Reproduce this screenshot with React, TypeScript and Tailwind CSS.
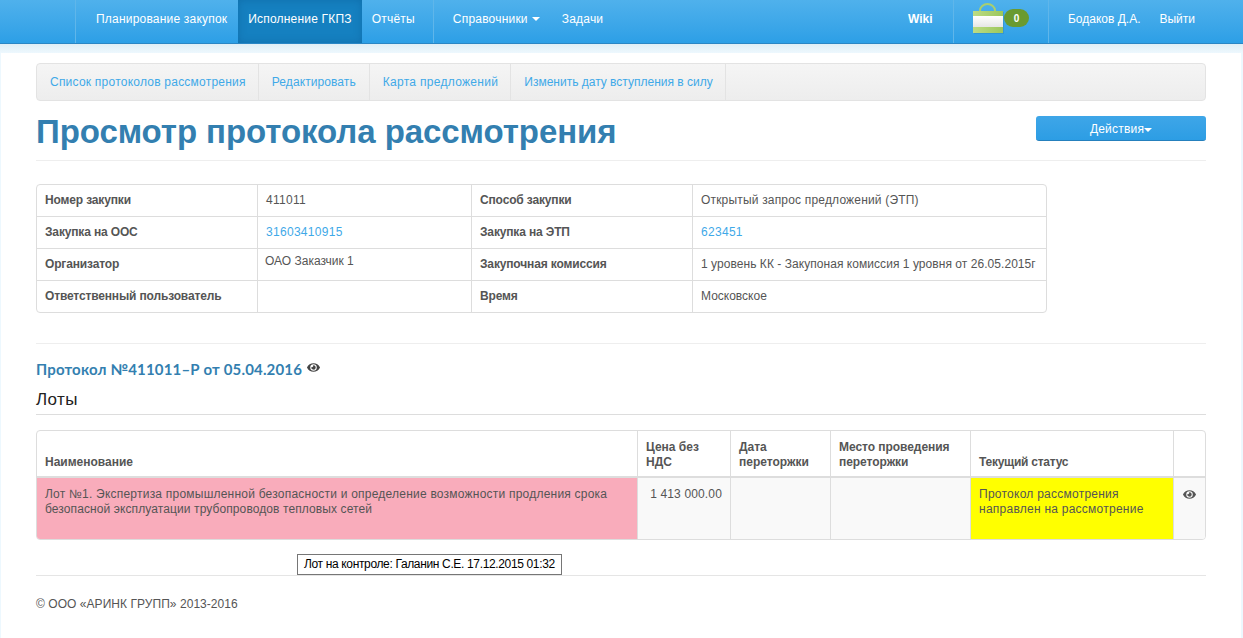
import { FaEye } from "react-icons/fa";

const font = "font-['Liberation_Sans',Arial,sans-serif]";

const BagIcon = () => (
	<svg width="31" height="31" viewBox="0 0 31 31">
		<defs>
			<linearGradient id="bagTop" x1="0" y1="0" x2="1" y2="0">
				<stop offset="0" stopColor="#bcdc84" />
				<stop offset="1" stopColor="#9cc75c" />
			</linearGradient>
			<linearGradient id="bagMid" x1="0" y1="0" x2="0" y2="1">
				<stop offset="0" stopColor="#ffffff" />
				<stop offset="1" stopColor="#e6e6e6" />
			</linearGradient>
		</defs>
		<path d="M7 9V7.5a7.5 6.5 0 0 1 15 0V9" fill="none" stroke="#a9cf6e" strokeWidth="2" />
		<rect x="1" y="9" width="30" height="22" fill="#2a7fb5" opacity="0.35" />
		<rect x="0" y="8" width="30" height="22" fill="url(#bagTop)" />
		<rect x="0" y="13" width="30" height="11" fill="url(#bagMid)" />
	</svg>
);

const Caret = ({ className = "" }: { className?: string }) => (
	<span
		className={`inline-block w-0 h-0 border-x-4 border-x-transparent border-t-4 border-t-white ${className}`}
	/>
);

const NavLink = ({
	children,
	active,
	className = "",
}: { children: React.ReactNode; active?: boolean; className?: string }) => (
	<div
		className={`flex items-center h-full pb-[6px] text-white text-[12px] ${active ? "bg-[#1580c0] shadow-[inset_0_0_8px_rgba(0,60,110,0.25)]" : ""} ${className}`}
	>
		{children}
	</div>
);

const InfoRow = ({
	a,
	b,
	c,
	d,
	last,
}: {
	a: string;
	b: React.ReactNode;
	c: string;
	d: React.ReactNode;
	last?: boolean;
}) => {
	const border = last ? "" : "border-b border-b-[#dddddd]";
	return (
		<tr className={last ? "h-[31px]" : "h-[32px]"}>
			<th className={`px-2 pb-[2px] text-left font-bold tracking-[-0.15px] align-middle ${border}`}>{a}</th>
			<td className={`px-2 pb-[2px] align-middle border-l border-l-[#dddddd] ${border}`}>{b}</td>
			<th className={`px-2 pb-[2px] text-left font-bold tracking-[-0.15px] align-middle border-l border-l-[#dddddd] ${border}`}>
				{c}
			</th>
			<td className={`px-2 pb-[2px] align-middle border-l border-l-[#dddddd] ${border}`}>{d}</td>
		</tr>
	);
};

export default function App() {
	return (
		<div className={`${font} relative h-[638px] overflow-hidden bg-[#edf8fe] text-[12px] text-[#555555]`}>
			{/* Top nav */}
			<div className="flex h-[44px] bg-gradient-to-b from-[#4fb1ec] to-[#2c9fe6] border-b border-b-[#2a86c4]">
				<div className="w-[76px] h-full border-r border-r-[#5fb6ea]" />
				<div className="flex h-full tracking-[0.2px]">
					<NavLink className="pl-[20px] pr-[11px]">Планирование закупок</NavLink>
					<NavLink active className="px-[10px]">
						Исполнение ГКПЗ
					</NavLink>
					<NavLink className="pl-[10px] pr-[18px] border-r border-r-[#5fb6ea]">Отчёты</NavLink>
					<NavLink className="pl-[19px] pr-[12px]">
						Справочники
						<Caret className="ml-[4px]" />
					</NavLink>
					<NavLink className="px-[10px]">Задачи</NavLink>
				</div>
				<div className="flex-1" />
				<div className="flex h-full">
					<NavLink className="w-[46px] font-bold pr-[21px] border-r border-r-[#5fb6ea]">Wiki</NavLink>
					<div className="flex items-start w-[95px] h-full pl-[19px] pt-[3px] border-r border-r-[#5fb6ea]">
						<BagIcon />
						<span className="mt-[6px] flex items-center justify-center w-[25px] h-[18px] rounded-full bg-[#6a9a30] text-white text-[10px] font-bold">
							0
						</span>
					</div>
					<NavLink className="pl-[19px] pr-[19px]">Бодаков Д.А.</NavLink>
					<NavLink className="pr-[48px]">Выйти</NavLink>
				</div>
			</div>
			<div className="h-[9px] bg-gradient-to-b from-[#e0eef5] to-[#edf8fe]" />

			{/* Content */}
			<div className="ml-[1px] mr-[2px] h-[585px] bg-white pl-[35px] pr-[35px] pt-[10px]">
				<div className="flex h-[38px] rounded-[4px] border border-[#e3e3e3] bg-gradient-to-b from-[#f5f5f5] to-[#ededed] text-[#3fa9e8]">
					<div className="flex items-center pl-[13px] pr-[12px] tracking-[0.23px] border-r border-r-[#e3e3e3]">
						Список протоколов рассмотрения
					</div>
					<div className="flex items-center pl-[13px] pr-[13px] tracking-[0.08px] border-r border-r-[#e3e3e3]">
						Редактировать
					</div>
					<div className="flex items-center pl-[13px] pr-[12px] tracking-[0.3px] border-r border-r-[#e3e3e3]">
						Карта предложений
					</div>
					<div className="flex items-center pl-[13px] pr-[12px] border-r border-r-[#e3e3e3]">
						Изменить дату вступления в силу
					</div>
				</div>

				<div className="flex items-start justify-between h-[60px] border-b border-b-[#eeeeee]">
					<h1 className="mt-[11px] text-[33px] leading-[40px] font-bold tracking-[-0.07px] text-[#337fb0]">
						Просмотр протокола рассмотрения
					</h1>
					<button className="mt-[15px] flex items-center justify-center pt-[2px] w-[170px] h-[25px] rounded-[3px] bg-gradient-to-b from-[#3ea6e8] to-[#2c9de4] border-b border-b-[#2580bd] text-white text-[12px] tracking-[0.2px]">
						Действия
						<Caret className="mt-[2px]" />
					</button>
				</div>

				<table className="mt-[23px] w-[1011px] table-fixed border-separate border-spacing-0 rounded-[4px] border border-[#dddddd]">
					<colgroup>
						<col className="w-[220px]" />
						<col className="w-[214px]" />
						<col className="w-[221px]" />
						<col />
					</colgroup>
					<tbody>
						<InfoRow
							a="Номер закупки"
							b={<span className="tracking-[0.3px]">411011</span>}
							c="Способ закупки"
							d={<span className="tracking-[0.18px]">Открытый запрос предложений (ЭТП)</span>}
						/>
						<InfoRow
							a="Закупка на ООС"
							b={<span className="text-[#3fa9e8] tracking-[0.3px]">31603410915</span>}
							c="Закупка на ЭТП"
							d={<span className="text-[#3fa9e8] tracking-[0.3px]">623451</span>}
						/>
						<InfoRow
							a="Организатор"
							b={<span className="relative -top-[3px] -left-[1px]">ОАО Заказчик 1</span>}
							c="Закупочная комиссия"
							d={<span className="tracking-[0.05px]">1 уровень КК - Закупоная комиссия 1 уровня от 26.05.2015г</span>}
						/>
						<InfoRow a="Ответственный пользователь" b="" c="Время" d="Московское" last />
					</tbody>
				</table>

				<div className="mt-[30px] border-t border-t-[#eeeeee] pt-[15px]">
					<div className="flex items-center h-[20px] font-['Lato',sans-serif] text-[15px] font-bold tracking-[0.16px] text-[#337fb0]">
						Протокол №411011–Р от 05.04.2016
						<FaEye className="ml-[5px] -mt-[3px] text-[13px] text-[#444444]" />
					</div>
				</div>
				<div className="mt-[9px] h-[27px] border-b border-b-[#dddddd] text-[17px] leading-[24px] tracking-[0.4px] text-[#222222]">
					Лоты
				</div>

				<table className="mt-[15px] w-[1170px] table-fixed border-separate border-spacing-0 rounded-[4px] border border-[#dddddd] overflow-hidden">
					<colgroup>
						<col className="w-[600px]" />
						<col className="w-[93px]" />
						<col className="w-[100px]" />
						<col className="w-[140px]" />
						<col className="w-[203px]" />
						<col />
					</colgroup>
					<thead>
						<tr className="h-[47px] leading-[15px] font-bold">
							<th className="px-2 pb-[6px] text-left align-bottom border-b-2 border-b-[#dddddd]">Наименование</th>
							<th className="px-2 pb-[6px] text-left align-bottom border-b-2 border-b-[#dddddd] border-l border-l-[#dddddd]">
								Цена без НДС
							</th>
							<th className="px-2 pb-[6px] text-left align-bottom border-b-2 border-b-[#dddddd] border-l border-l-[#dddddd]">
								Дата переторжки
							</th>
							<th className="px-2 pb-[6px] text-left align-bottom tracking-[-0.05px] border-b-2 border-b-[#dddddd] border-l border-l-[#dddddd]">
								Место проведения переторжки
							</th>
							<th className="px-2 pb-[6px] text-left align-bottom tracking-[-0.25px] border-b-2 border-b-[#dddddd] border-l border-l-[#dddddd]">
								Текущий статус
							</th>
							<th className="border-b-2 border-b-[#dddddd] border-l border-l-[#dddddd]" />
						</tr>
					</thead>
					<tbody>
						<tr className="h-[61px] leading-[15px]">
							<td className="px-2 pt-[9px] align-top bg-[#f9acbb]">
								<span className="block tracking-[0.22px] whitespace-nowrap">
									Лот №1. Экспертиза промышленной безопасности и определение возможности продления срока
								</span>
								<span className="block tracking-[0.1px]">
									безопасной эксплуатации трубопроводов тепловых сетей
								</span>
							</td>
							<td className="px-2 pt-[9px] align-top text-right tracking-[0.15px] bg-[#f9f9f9] border-l border-l-[#dddddd]">
								1 413 000.00
							</td>
							<td className="bg-[#f9f9f9] border-l border-l-[#dddddd]" />
							<td className="bg-[#f9f9f9] border-l border-l-[#dddddd]" />
							<td className="px-2 pt-[9px] align-top tracking-[0.25px] bg-[#ffff00] border-l border-l-[#dddddd]">
								Протокол рассмотрения направлен на рассмотрение
							</td>
							<td className="pt-[10px] align-top bg-[#f9f9f9] border-l border-l-[#dddddd]">
								<FaEye className="mx-auto text-[13px] text-[#555555]" />
							</td>
						</tr>
					</tbody>
				</table>

				<div className="mt-[35px] border-t border-t-[#e5e5e5] pt-[19px] tracking-[0.05px] text-[#555555]">
					© ООО «АРИНК ГРУПП» 2013-2016
				</div>
			</div>

			{/* Tooltip */}
			<div className="absolute left-[297px] top-[554px] h-[21px] border border-[#767676] bg-white px-[6px] text-[12px] leading-[19px] tracking-[-0.35px] text-black whitespace-nowrap">
				Лот на контроле: Галанин С.Е. 17.12.2015 01:32
			</div>
		</div>
	);
}
